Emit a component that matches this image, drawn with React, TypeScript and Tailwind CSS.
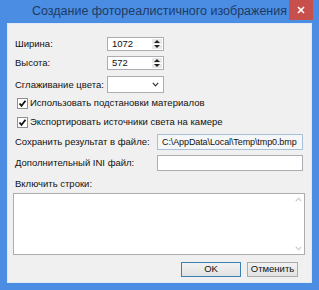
import React from "react";

const font = { fontFamily: '"Liberation Sans", Arial, sans-serif' };

function Spin({ value }: { value: string }) {
  return (
    <div className="flex h-[14px] w-[57px] border border-[#abadb3] bg-white">
      <div className="flex flex-1 items-center pl-[4px] text-[9.5px] leading-none text-[#111]">{value}</div>
      <div className="flex w-[12px] flex-col gap-px p-px">
        <div className="flex flex-1 items-center justify-center bg-[#e8e8e8]">
          <div className="h-0 w-0 border-x-[3px] border-b-[3px] border-x-transparent border-b-[#222]" />
        </div>
        <div className="flex flex-1 items-center justify-center bg-[#e8e8e8]">
          <div className="h-0 w-0 border-x-[3px] border-t-[3px] border-x-transparent border-t-[#222]" />
        </div>
      </div>
    </div>
  );
}

function Check({ label }: { label: string }) {
  return (
    <div className="flex h-[14px] items-center gap-[2px] pl-[9px]">
      <div className="flex h-[11px] w-[11px] items-center justify-center border border-[#8f8f8f] bg-white">
        <svg width="9" height="9" viewBox="0 0 9 9">
          <path d="M1.5 4.5 L3.5 6.8 L7.5 1.8" stroke="#111" strokeWidth="1.8" fill="none" />
        </svg>
      </div>
      <span className="text-[9.5px] leading-none text-[#111]">{label}</span>
    </div>
  );
}

export default function App() {
  return (
    <div className="flex h-[290px] w-[319px] flex-col bg-[#4a8de2]" style={font}>
      {/* title bar */}
      <div className="relative flex h-[23px] items-center justify-center">
        <span className="text-[12.5px] text-[#1d3b66]">Создание фотореалистичного изображения</span>
        <div className="absolute right-[6px] top-0 flex h-[20px] w-[24px] items-center justify-center bg-[#c7504c]">
          <svg width="8" height="8" viewBox="0 0 8 8">
            <path d="M1 1 L7 7 M7 1 L1 7" stroke="#fff" strokeWidth="1.6" />
          </svg>
        </div>
      </div>

      {/* client area */}
      <div className="mx-[7px] mb-[7px] flex flex-1 flex-col border border-[#dfe9f5] bg-[#f0f0f0] text-[9.5px] leading-none text-[#111]">
        <div className="mt-[13px] flex h-[14px] items-center pl-[7px]">
          <span className="w-[92px]">Ширина:</span>
          <Spin value="1072" />
        </div>
        <div className="mt-[5px] flex h-[14px] items-center pl-[7px]">
          <span className="w-[92px]">Высота:</span>
          <Spin value="572" />
        </div>
        <div className="mt-[6px] flex h-[17px] items-center pl-[7px]">
          <span className="w-[92px]">Сглаживание цвета:</span>
          <div className="flex h-[17px] w-[57px] items-center justify-end border border-[#abadb3] bg-white pr-[4px]">
            <svg width="7" height="5" viewBox="0 0 7 5">
              <path d="M0.8 0.8 L3.5 3.8 L6.2 0.8" stroke="#333" strokeWidth="1.2" fill="none" />
            </svg>
          </div>
        </div>
        <div className="mt-[3px]">
          <Check label="Использовать подстановки материалов" />
        </div>
        <div className="mt-[5px]">
          <Check label="Экспортировать источники света на камере" />
        </div>
        <div className="mt-[5px] flex h-[16px] items-center pl-[7px]">
          <span className="w-[142px]">Сохранить результат в файле:</span>
          <div className="flex h-[16px] w-[146px] items-center overflow-hidden whitespace-nowrap border border-[#a9c0da] bg-[#f4f6f8] pl-[4px] text-[9px] tracking-[-0.1px]">
            C:\AppData\Local\Temp\tmp0.bmp
          </div>
        </div>
        <div className="mt-[5px] flex h-[16px] items-center pl-[7px]">
          <span className="w-[142px]">Дополнительный INI файл:</span>
          <div className="h-[16px] w-[146px] border border-[#abadb3] bg-white" />
        </div>
        <div className="mt-[8px] pl-[7px]">Включить строки:</div>
        <div className="ml-[5px] mt-[4px] flex h-[62px] w-[292px] justify-end border border-[#abadb3] bg-white">
          <div className="flex w-[12px] flex-col items-center justify-between py-[3px]">
            <svg width="7" height="5" viewBox="0 0 7 5">
              <path d="M0.8 4.2 L3.5 1.2 L6.2 4.2" stroke="#c8c8c8" strokeWidth="1.1" fill="none" />
            </svg>
            <svg width="7" height="5" viewBox="0 0 7 5">
              <path d="M0.8 0.8 L3.5 3.8 L6.2 0.8" stroke="#c8c8c8" strokeWidth="1.1" fill="none" />
            </svg>
          </div>
        </div>
        <div className="mr-[13px] mt-[7px] flex justify-end gap-[6px]">
          <div className="flex h-[15px] w-[60px] items-center justify-center border border-[#3c7fb1] bg-gradient-to-b from-[#f2f2f2] to-[#e2e2e2]">
            OK
          </div>
          <div className="flex h-[15px] w-[51px] items-center justify-center border border-[#acacac] bg-gradient-to-b from-[#f2f2f2] to-[#e2e2e2]">
            Отменить
          </div>
        </div>
      </div>
    </div>
  );
}
